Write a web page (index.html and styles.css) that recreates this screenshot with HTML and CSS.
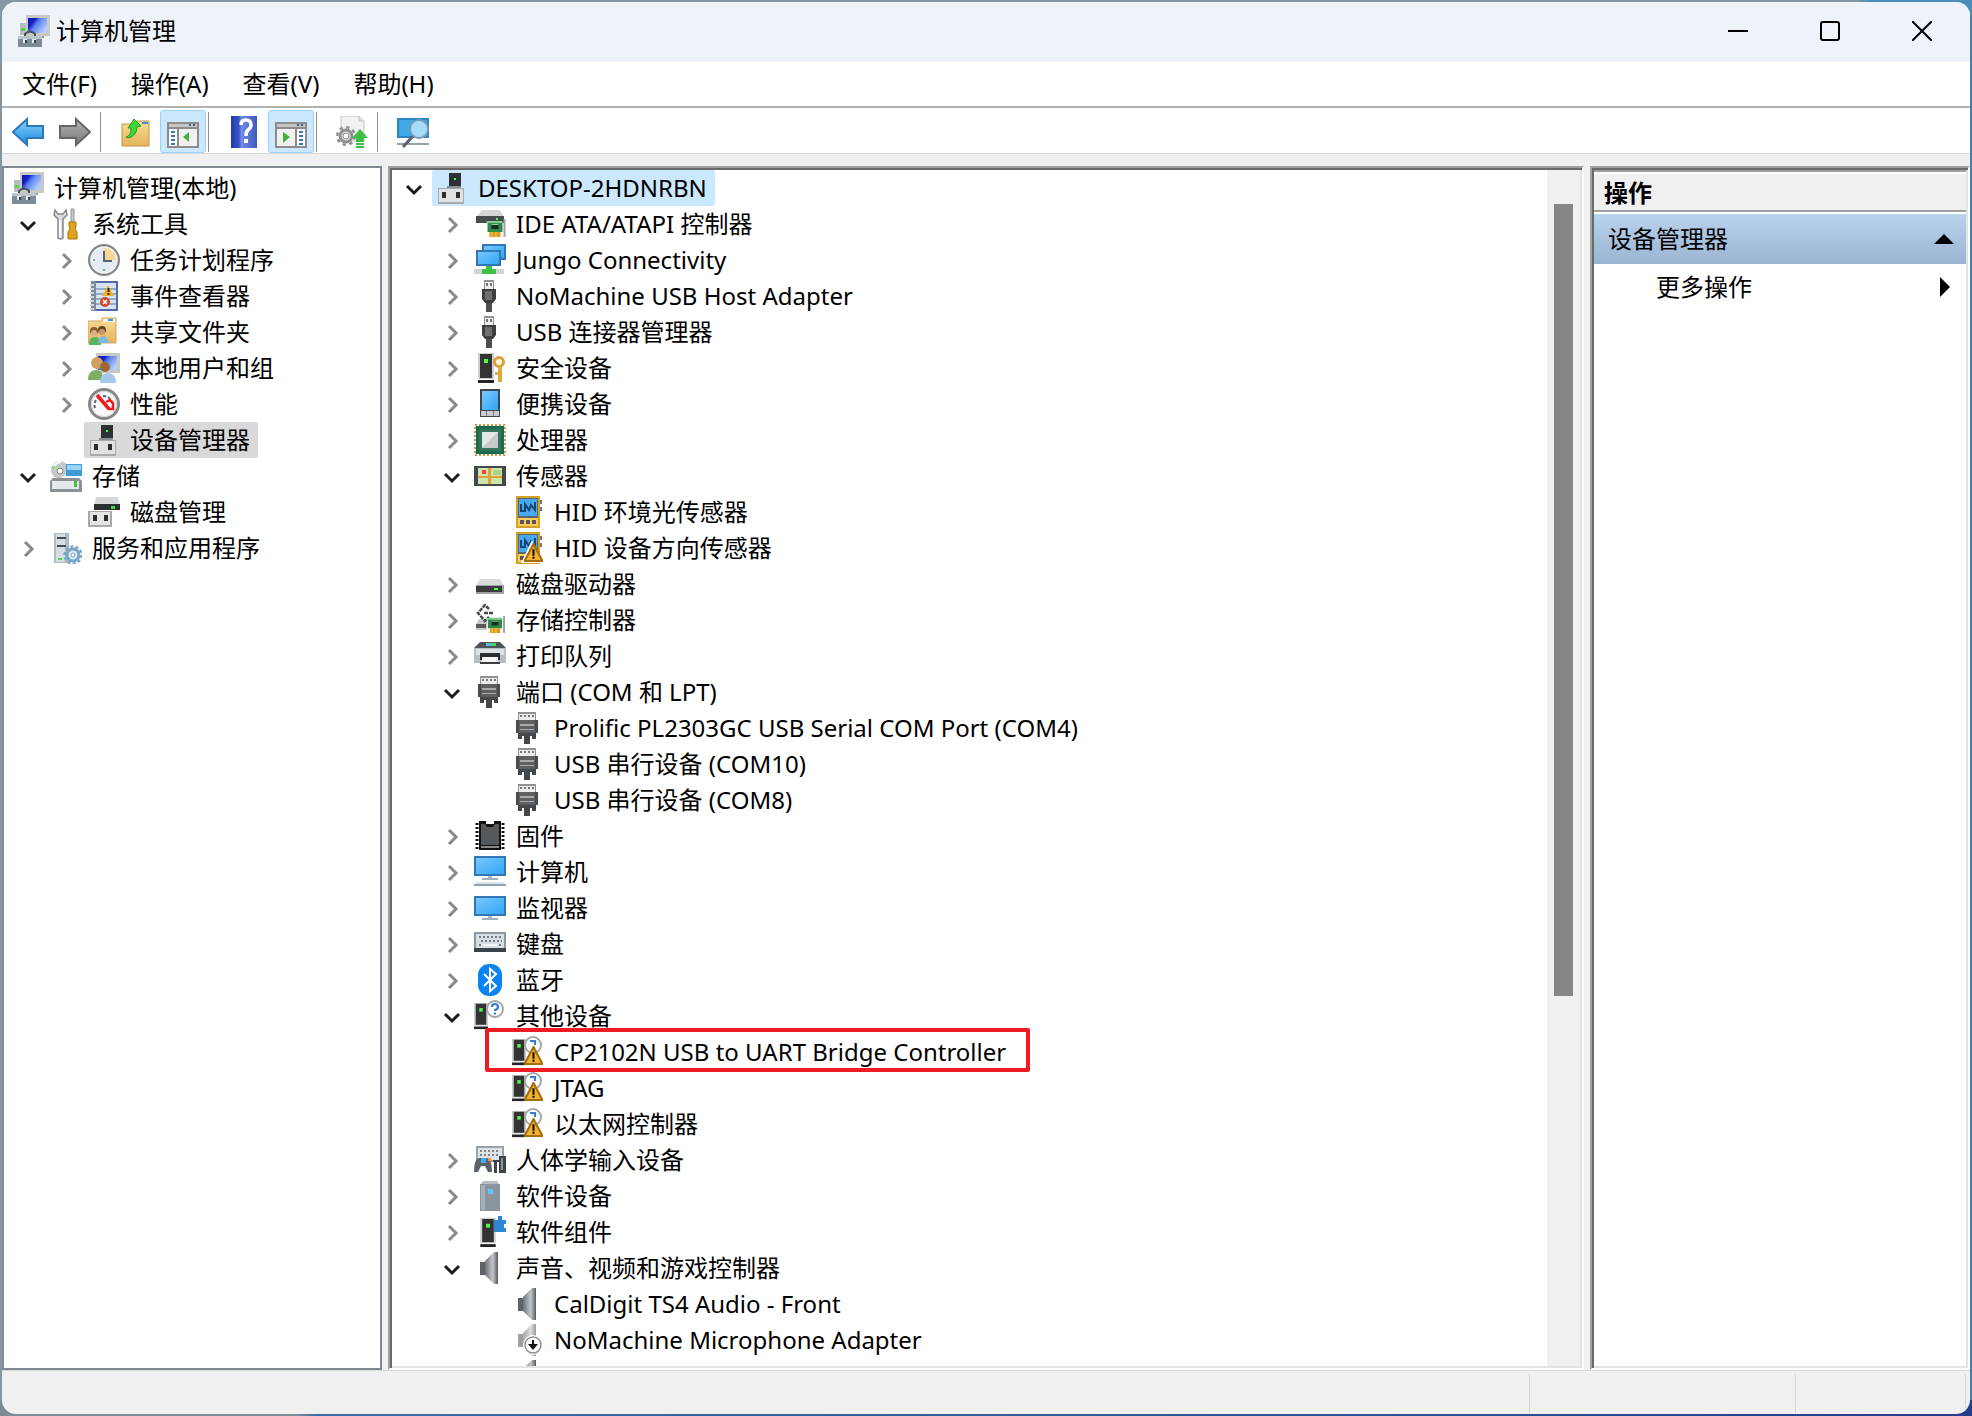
FILE: index.html
```html
<!DOCTYPE html>
<html lang="zh-CN">
<head>
<meta charset="utf-8">
<title>计算机管理</title>
<link rel="stylesheet" href="styles.css">
</head>
<body>
<svg class="sprite" aria-hidden="true">
  <defs>
    <linearGradient id="sky" x1="0" y1="0" x2="1" y2="1"><stop offset="0" stop-color="#7cc8ff"/><stop offset="1" stop-color="#2ea6f5"/></linearGradient>
    <linearGradient id="navy" x1="0" y1="0" x2="1" y2="0.6"><stop offset="0.3" stop-color="#1020c0"/><stop offset="0.5" stop-color="#5a80ee"/><stop offset="1" stop-color="#b4ccff"/></linearGradient>
    <linearGradient id="cone" x1="0" y1="0" x2="1" y2="0"><stop offset="0" stop-color="#6d7277"/><stop offset="0.6" stop-color="#c4c7ca"/><stop offset="1" stop-color="#55595d"/></linearGradient>
    <linearGradient id="folder" x1="0" y1="0" x2="0" y2="1"><stop offset="0" stop-color="#f8dc98"/><stop offset="1" stop-color="#e2b45a"/></linearGradient>
    <linearGradient id="arrowblue" x1="0" y1="0" x2="0" y2="1"><stop offset="0" stop-color="#8ad4fa"/><stop offset="1" stop-color="#1c8ae0"/></linearGradient>
    <linearGradient id="arrowgrey" x1="0" y1="0" x2="0" y2="1"><stop offset="0" stop-color="#b4b4b4"/><stop offset="1" stop-color="#777"/></linearGradient>
    <linearGradient id="book" x1="0" y1="0" x2="1" y2="0"><stop offset="0" stop-color="#2438a8"/><stop offset="0.3" stop-color="#3a54c4"/><stop offset="0.4" stop-color="#6f8cec"/><stop offset="1" stop-color="#4058b8"/></linearGradient>
  </defs>

  <symbol id="warn" viewBox="0 0 18 18"><path d="M9 1 17.500 17H.5z" fill="#f3b233" stroke="#a86c0a" stroke-width="2"/><path d="M8 6h2v6H8zM8 13h2v2H8z" fill="#111"/></symbol>
  <symbol id="card" viewBox="0 0 20 20"><path d="M2 3h15v11H2z" fill="#2f8a4a"/><path d="M1 3h16v2H1z" fill="#7ed08a"/><path d="M6 6h7v5H6z" fill="#1d2b24"/><path d="M6 6h7v1H6z" fill="#8fd49a"/><path d="M4 14h11v5H4z" fill="#dc9a1e"/><path d="M6 14h1v5H6zM10 14h1v5h-1z" fill="#f6cf6a"/><path d="M18 1h2v18h-2z" fill="#9aa0a4"/></symbol>
  <symbol id="tower" viewBox="0 0 16 30"><path d="M0 0h16v26H0z" fill="#cdd0d2"/><path d="M2 1h12v24H2z" fill="#333"/><path d="M6 6h4v4H6z" fill="#4cff3c"/><path d="M0 27h16v3H0z" fill="#20262a"/></symbol>

  <symbol id="i-mgmt" viewBox="0 0 32 32"><path d="M2 8h8v12H2z" fill="#b9bcbe"/><path d="M3 13h4v3H3z" fill="#4cd83c"/><path d="M8 0h24v21H8z" fill="#c9c9c4"/><path d="M10 3h19v15H10z" fill="url(#navy)"/><path d="M17 21h9v2h-9z" fill="#9a9a94"/><path d="M7 21v-2q5-5 10 0v2" fill="none" stroke="#4c5358" stroke-width="2"/><path d="M0 21h24v11H0z" fill="#7d8b96"/><path d="M0 21h24v3H0z" fill="#bcc6cd"/><path d="M5 24h4v4H5zM14 24h4v4h-4z" fill="#e8ecef"/><path d="M7 25h2v3H7zM16 25h2v3h-2z" fill="#33414c"/></symbol>
  <symbol id="i-tools" viewBox="0 0 32 32"><path d="M5 2 4 7l4 4v19q2.500 2 5 0V11l4-4-1-5-3 4H8z" fill="#d9dbdd" stroke="#85898d" stroke-width="1.500"/><path d="M9 12h2v17H9z" fill="#fff"/><path d="M21 1h3v13h-3z" fill="#c8cbcd" stroke="#8f9295"/><path d="M19 14h7v4l-1 3 2 3v7h-9v-7l2-3-1-3z" fill="#e2a21c" stroke="#a87409"/></symbol>
  <symbol id="i-clock" viewBox="0 0 32 32"><circle cx="16" cy="16" r="14.500" fill="#e4edf5" stroke="#85878a" stroke-width="3"/><circle cx="16" cy="16" r="13" fill="none" stroke="#f6f6f6" stroke-width="1.500"/><path d="M16 16V4a12 12 0 0 1 12 12z" fill="#f6d795"/><path d="M16 7v10h8" fill="none" stroke="#5a6470" stroke-width="2"/><path d="M16 25v2M5 16h2" stroke="#8aa" stroke-width="2"/></symbol>
  <symbol id="i-log" viewBox="0 0 32 32"><path d="M3 1h27v30H3z" fill="#5569a8"/><path d="M8 3h20v26H8z" fill="#d5e3f2"/><path d="M8 9h20M8 14h20M8 19h20M8 24h20" stroke="#7f9cc0" stroke-width="1.500"/><path d="M3 1h5v30H3z" fill="#7c8a9a"/><path d="M2 5h4M2 9h4M2 13h4M2 17h4M2 21h4M2 25h4M2 29h4" stroke="#d2d6da" stroke-width="2"/><path d="M20 5l6 11H14z" fill="#f4b128"/><path d="M19.500 8h2v4h-2zM19.500 13h2v2h-2z" fill="#3a2a00"/><circle cx="17" cy="22" r="5" fill="#d0492c"/><path d="M15 20l4 4M19 20l-4 4" stroke="#fff" stroke-width="1.500"/></symbol>
  <symbol id="i-share" viewBox="0 0 32 32"><path d="M0 5h14V2h14v25H0z" fill="url(#folder)" stroke="#d0a860"/><path d="M15 3h12v3H15z" fill="#fdf6dd"/><path d="M20 3h5v2h-5z" fill="#3d8fe0"/><circle cx="6" cy="15" r="4" fill="#8a5a30"/><circle cx="6" cy="17" r="3" fill="#d8b088"/><circle cx="14" cy="14" r="4" fill="#6a4520"/><circle cx="14" cy="16" r="3" fill="#c89868"/><path d="M1 29q0-8 6-8t6 8z" fill="#58b65c"/><path d="M10 27q1-7 5-7t6 7z" fill="#7db8ea"/></symbol>
  <symbol id="i-users" viewBox="0 0 32 32"><path d="M8 1h24v20H8z" fill="#c9c9c4"/><path d="M10 4h19v14H10z" fill="url(#navy)"/><circle cx="9" cy="11" r="6" fill="#d0a060"/><circle cx="17" cy="15" r="5" fill="#9a6a38"/><path d="M0 28q0-10 8-10t7 10z" fill="#7fae62"/><path d="M12 31q0-10 8-10t8 10z" fill="#a4c8ec"/></symbol>
  <symbol id="i-perf" viewBox="0 0 32 32"><circle cx="16" cy="16" r="14.500" fill="#fafafa" stroke="#85878a" stroke-width="3"/><circle cx="16" cy="16" r="12.500" fill="none" stroke="#d8d8d8"/><path d="M7 20a9 9 0 0 1 3-10M15 8q7 0 9 7" fill="none" stroke="#5d666e" stroke-width="2" stroke-dasharray="3 2"/><path d="M9 7l12 14" stroke="#ee1c1c" stroke-width="3.500"/><path d="M18 14l4-2 3 3v6h-5" fill="none" stroke="#ee1c1c" stroke-width="2.500"/></symbol>
  <symbol id="i-devmgr" viewBox="0 0 32 32"><path d="M13 1h12v14H13z" fill="#2e3133"/><path d="M18 6h2v2h-2z" fill="#4cff3c"/><path d="M11 14h14v2H11z" fill="#8a8e91"/><path d="M2 16h26v16H2z" fill="#a7aaad"/><path d="M3 17h24v13H3z" fill="#dfe1e3"/><path d="M6 20h4v6H6zM20 20h4v6h-4z" fill="#2a2c2e"/></symbol>
  <symbol id="i-storage" viewBox="0 0 32 32"><circle cx="10" cy="10" r="9" fill="#c5c9cc"/><path d="M3 8q3-6 8-6M12 18q5-1 6-6" stroke="#fff" stroke-width="2" fill="none"/><circle cx="10" cy="11" r="3" fill="#fff" stroke="#888"/><path d="M2 6h3v3H2z" fill="#8fe07a"/><path d="M16 4h16v12H16z" fill="#3f9bd8"/><path d="M17 5h14v5H17z" fill="#9ad4f6"/><path d="M3 18h26l3 3v11H0V21z" fill="#8b9095"/><path d="M2 21h27v8H2z" fill="#e6e9eb"/><path d="M24 21h3v6h-3z" fill="#3cc83c"/></symbol>
  <symbol id="i-diskmgmt" viewBox="0 0 32 32"><path d="M8 1h22l2 8H6z" fill="#d5d8da"/><path d="M6 8h26v6H6z" fill="#2d3032"/><path d="M23 10h4v3h-4z" fill="#3ce03c"/><path d="M0 15h24v16H0z" fill="#a7aaad"/><path d="M2 16h20v13H2z" fill="#e2e4e6"/><path d="M5 19h4v6H5zM16 19h4v6h-4z" fill="#2a2c2e"/></symbol>
  <symbol id="i-services" viewBox="0 0 32 32"><path d="M4 1h15v30H4z" fill="#aeb9c2"/><path d="M6 2h9v28H6z" fill="#d5dde3"/><path d="M7 5h9v2H7zM7 13h9v2H7z" fill="#3f4a52"/><path d="M8 26h4v2H8z" fill="#56d848"/><circle cx="23" cy="23" r="6" fill="#dcebf6" stroke="#7ba5c6" stroke-width="3"/><circle cx="23" cy="23" r="8.500" fill="none" stroke="#7ba5c6" stroke-width="2.500" stroke-dasharray="3 2.300"/><circle cx="23" cy="23" r="2" fill="#fff" stroke="#7ba5c6"/></symbol>

  <symbol id="i-ide" viewBox="0 0 32 32"><path d="M8 2h18l4 7H2z" fill="#d3d5d7"/><path d="M2 8h28v7H2z" fill="#484b4d"/><use href="#card" x="11" y="10" width="21" height="20"/><path d="M22 10h2v2h-2z" fill="#4cff3c"/></symbol>
  <symbol id="i-jungo" viewBox="0 0 32 32"><path d="M9 1h22v14H9z" fill="url(#sky)" stroke="#2f78b4" stroke-width="2"/><path d="M3 7h23v14H3z" fill="url(#sky)" stroke="#2f78b4" stroke-width="2"/><path d="M0 25h30v5H0z" fill="#d3d6d8"/><path d="M12 22h6v3h4v5H8v-5h4z" fill="#3fbf48"/></symbol>
  <symbol id="i-usb" viewBox="0 0 32 32"><path d="M10 0h10v9H10z" fill="#909396"/><path d="M11 2h8v7h-8z" fill="#eceeef"/><path d="M12 3h2v3h-2zM16 3h2v3h-2z" fill="#777"/><path d="M8 9h14v10l-3 4h-8l-3-4z" fill="#3d4042"/><path d="M11 11h7v9h-7z" fill="#6d7073"/><path d="M12 23h6v9h-6z" fill="#4b4e50"/></symbol>
  <symbol id="i-security" viewBox="0 0 32 32"><use href="#tower" x="4" y="1" width="16" height="30"/><circle cx="25" cy="10" r="4.500" fill="#fff6df" stroke="#d9a23a" stroke-width="3"/><path d="M24 15h4v15h-4zM21 20h3v3h-3z" fill="#e0a93e"/></symbol>
  <symbol id="i-portable" viewBox="0 0 32 32"><path d="M6 1h20v28H6z" fill="#3f474e"/><path d="M8 3h16v19H8z" fill="url(#sky)"/><path d="M7 23h18v5H7z" fill="#c8ccd0"/><path d="M12 23h1v5h-1zM19 23h1v5h-1z" fill="#777"/></symbol>
  <symbol id="i-cpu" viewBox="0 0 32 32"><rect x="1" y="1" width="30" height="30" fill="none" stroke="#c0a050" stroke-width="2" stroke-dasharray="2 2"/><path d="M2 2h28v28H2z" fill="#1d6a50"/><path d="M5 5h22v22H5z" fill="#35735c"/><path d="M8 8h16v16H8z" fill="#c8cacb"/><path d="M8 24 24 8H8z" fill="#e5e6e7"/></symbol>
  <symbol id="i-sensor" viewBox="0 0 32 32"><path d="M0 6h32v20H0z" fill="#44494e"/><path d="M4 8h24v16H4z" fill="#cfe5a8"/><path d="M14 8h3v16h-3zM4 16h24v2H4z" fill="#e0a13a"/><path d="M8 10h4v4H8z" fill="#f04848"/><path d="M19 10h8v5h-8z" fill="#a9d487"/></symbol>
  <symbol id="i-hid" viewBox="0 0 32 32"><path d="M4 0h24v32H4z" fill="#d2a023"/><path d="M6 2h20v20H6z" fill="#5b666f"/><path d="M7 3h18v17H7z" fill="#45aaf2"/><path d="M9 8v7h4V8l4 6 2-5 4 5V6" fill="none" stroke="#164572" stroke-width="2"/><path d="M6 22h20v8H6z" fill="#f6cd5c"/><path d="M8 24h4v4H8zM14 24h4v4h-4zM20 24h4v4h-4z" fill="#555"/><path d="M28 4h2v4h-2zM28 11h2v4h-2z" fill="#777"/></symbol>
  <symbol id="i-hidwarn" viewBox="0 0 32 32"><use href="#i-hid" width="32" height="32"/><path d="M20 8 31 31H9z" fill="#fff"/><use href="#warn" x="12" y="11" width="19" height="19"/></symbol>
  <symbol id="i-disk" viewBox="0 0 32 32"><path d="M6 11h20l4 7H2z" fill="#d9dbdd"/><path d="M2 17h28v9H2z" fill="#9ea2a5"/><path d="M2 18h26v6H2z" fill="#3a3d3f"/><path d="M20 20h4v2h-4z" fill="#4cff3c"/></symbol>
  <symbol id="i-storctrl" viewBox="0 0 32 32"><path d="M2 20l3-5h8v11H2z" fill="#c6c9cb"/><path d="M2 20h10v4H2z" fill="#55595c"/><path d="M15 5l-4-4-7 8 7 8 4-4M10 9h9" fill="none" stroke="#454a4e" stroke-width="2.500" stroke-dasharray="4 1"/><use href="#card" x="11" y="11" width="21" height="19"/></symbol>
  <symbol id="i-printer" viewBox="0 0 32 32"><path d="M6 2h20l6 6H0z" fill="#4c545a"/><path d="M12 3h9v3h-9z" fill="#55b8f4"/><path d="M17 3h5v3h-5z" fill="#50d850"/><path d="M0 8h32v15H0z" fill="#b9bec2"/><path d="M2 9h28v6H2z" fill="#dfe2e4"/><path d="M6 13h20v7H6z" fill="#2a2e31"/><path d="M8 17h16v6H8z" fill="#f4f5f6"/><path d="M6 22h20v2H6z" fill="#3a3f43"/></symbol>
  <symbol id="i-port" viewBox="0 0 32 32"><path d="M6 0h18v9H6z" fill="#909396"/><path d="M7 2h16v6H7z" fill="#e9ebec"/><path d="M8 3h2v2H8zM12 3h2v2h-2zM16 3h2v2h-2zM20 3h2v2h-2z" fill="#777"/><path d="M4 8h22v13H4z" fill="#494c4f"/><path d="M7 8h16v13H7z" fill="#5d6063"/><path d="M8 12h14v2H8zM8 17h14v1H8z" fill="#aaa"/><path d="M6 21h18v6h-4v-3h-2v8h-6v-8h-2v3H6z" fill="#45484a"/></symbol>
  <symbol id="i-firmware" viewBox="0 0 32 32"><path d="M5 1h22v29H5z" fill="#111"/><path d="M3 3v26M29 3v26" stroke="#111" stroke-width="3" stroke-dasharray="2 2"/><path d="M7 4h4l2 3h6l2-3h4v21H7z" fill="#55595c"/><path d="M7 26h18v2H7z" fill="#888"/><path d="M12 1h8v3h-8z" fill="#fff"/></symbol>
  <symbol id="i-computer" viewBox="0 0 32 32"><path d="M1 1h30v18H1z" fill="url(#sky)" stroke="#2f78b4" stroke-width="2"/><path d="M14 20h4v2h-4z" fill="#b4bcc4"/><path d="M8 22h16v2H8z" fill="#9fb0be"/><path d="M0 28h32v2H0z" fill="#8fa2b2"/><path d="M2 26h28v2H2z" fill="#dde2e6"/></symbol>
  <symbol id="i-monitor" viewBox="0 0 32 32"><path d="M1 5h30v18H1z" fill="url(#sky)" stroke="#2f78b4" stroke-width="2"/><path d="M14 24h4v3h-4z" fill="#b4bcc4"/><path d="M8 26h16v2H8z" fill="#9fb0be"/></symbol>
  <symbol id="i-keyboard" viewBox="0 0 32 32"><path d="M0 4h32v20H0z" fill="#8d979f"/><path d="M2 6h28v14H2z" fill="#d9dee2"/><path d="M5 9h23M7 13h21M5 17h23" stroke="#747d85" stroke-width="2" stroke-dasharray="2 2"/><path d="M9 16h14v2H9z" fill="#f4f6f7"/><path d="M0 20h32v4H0z" fill="#3b4348"/></symbol>
  <symbol id="i-bluetooth" viewBox="0 0 32 32"><rect x="4" y="0" width="24" height="32" rx="11" fill="#0a84f4"/><path d="M10 10l12 12-6 5V5l6 5-12 12" fill="none" stroke="#fff" stroke-width="2"/></symbol>
  <symbol id="i-other" viewBox="0 0 32 32"><use href="#tower" x="0" y="1" width="14" height="30" preserveAspectRatio="none"/><circle cx="21" cy="9" r="8" fill="#fff" stroke="#a4a8ab" stroke-width="2"/><path d="M18 7q0-3 3-3t3 3q0 2-3 3v1M21 12.500v2" fill="none" stroke="#2e7fd0" stroke-width="2.200"/></symbol>
  <symbol id="i-otherwarn" viewBox="0 0 32 32"><use href="#tower" x="0" y="1" width="14" height="30"/><circle cx="21" cy="9" r="8" fill="#fff" stroke="#a4a8ab" stroke-width="2"/><path d="M18 5h5v4" fill="none" stroke="#2e7fd0" stroke-width="2.200"/><use href="#warn" x="12" y="10" width="19" height="19"/></symbol>
  <symbol id="i-human" viewBox="0 0 32 32"><path d="M2 2h28v16H2z" fill="#98a2aa"/><path d="M4 4h24v12H4z" fill="#dfe3e6"/><path d="M6 7h20M6 11h20" stroke="#7b848b" stroke-width="2" stroke-dasharray="2 2"/><path d="M0 28q0-13 5-14h8q5 1 5 14h-4l-3-6H7l-3 6z" fill="#5a6269"/><path d="M7 14h5v5H7z" fill="#39b0f4"/><path d="M14 14h3v3h-3z" fill="#f0a030"/><path d="M15 18h2v2h-2z" fill="#e04040"/><path d="M19 16h6v2h-6zM20 18h3v11h-3zM25 12h7v17h-7z" fill="#3c4349"/><path d="M27 14h2v12h-2z" fill="#8a949c"/></symbol>
  <symbol id="i-softdev" viewBox="0 0 32 32"><path d="M9 1h14l3 4H6z" fill="#b6bec5"/><path d="M6 4h20v27H6z" fill="#8b959e"/><path d="M7 5h4v25H7z" fill="#a6afb7"/><path d="M14 9h5v5h-5z" fill="#5cc4ff"/></symbol>
  <symbol id="i-softcomp" viewBox="0 0 32 32"><use href="#tower" x="6" y="2" width="16" height="29"/><path d="M20 4h4V0h4v4h4v4h-2v4h2v4H20z" fill="#2f86d4"/></symbol>
  <symbol id="i-speaker" viewBox="0 0 32 32"><path d="M6 10h5v13H6z" fill="#5e6367"/><path d="M11 9 20 0h4v32h-4l-9-9z" fill="url(#cone)"/></symbol>
  <symbol id="i-speakerdown" viewBox="0 0 32 32"><g opacity="0.600"><use href="#i-speaker" width="32" height="32"/></g><circle cx="21" cy="21" r="10" fill="#fff"/><circle cx="21" cy="21" r="8" fill="#fff" stroke="#8b8f92" stroke-width="1.500"/><path d="M20 16h2v4h4l-5 6-5-6h4z" fill="#111"/></symbol>

  <symbol id="i-back" viewBox="0 0 32 32"><path d="M1 16 15 3v7h16v12H15v7z" fill="url(#arrowblue)" stroke="#2a78c0" stroke-width="2"/></symbol>
  <symbol id="i-forward" viewBox="0 0 32 32"><path d="M31 16 17 3v7H1v12h16v7z" fill="url(#arrowgrey)" stroke="#666" stroke-width="2"/></symbol>
  <symbol id="i-up" viewBox="0 0 32 32"><path d="M2 8h14V5h13v25H2z" fill="url(#folder)" stroke="#c0964a"/><path d="M22 6h6v2h-6z" fill="#3d8fe0"/><path d="M6 21q5-1 5-9H8l6-9 7 7-4 1q0 9-9 11z" fill="#3fd437" stroke="#28a022"/></symbol>
  <symbol id="i-treepane" viewBox="0 0 32 32"><path d="M1 7h30v24H1z" fill="#fff" stroke="#8c8c8c" stroke-width="2"/><path d="M2 8h28v3H2z" fill="#c6c6c6"/><path d="M2 11h28v2H2z" fill="#8c8c8c"/><path d="M22 8h2v2h-2zM26 8h2v2h-2z" fill="#3a5a80"/><path d="M10 13h2v17h-2z" fill="#8c8c8c"/><path d="M12 13h18v17H12z" fill="#f1f1f1"/><path d="M4 16h4M4 20h4M4 24h4M4 28h4" stroke="#3d78b8" stroke-width="2"/><path d="M22 16v10l-6-5z" fill="#3db43c"/></symbol>
  <symbol id="i-actionpane" viewBox="0 0 32 32"><path d="M1 7h30v24H1z" fill="#fff" stroke="#8c8c8c" stroke-width="2"/><path d="M2 8h28v3H2z" fill="#c6c6c6"/><path d="M2 11h28v2H2z" fill="#8c8c8c"/><path d="M22 8h2v2h-2zM26 8h2v2h-2z" fill="#3a5a80"/><path d="M20 13h2v17h-2z" fill="#8c8c8c"/><path d="M2 13h18v17H2z" fill="#f1f1f1"/><path d="M24 16h4M24 20h4M24 24h4M24 28h4" stroke="#3d78b8" stroke-width="2"/><path d="M8 16v11l7-6z" fill="#3db43c"/></symbol>
  <symbol id="i-help" viewBox="0 0 32 32"><path d="M3 0h26v32H3z" fill="url(#book)"/><path d="M13 9q0-5 5-5t5 5q0 3-3 5-2 1.500-2 6" fill="none" stroke="#fff" stroke-width="3.500"/><path d="M16 23h4v4h-4z" fill="#fff"/></symbol>
  <symbol id="i-update" viewBox="0 0 32 32"><path d="M5 0h18l5 5v20H5z" fill="#f1f2f3" stroke="#c2c5c8"/><path d="M23 0v5h5" fill="#ddd" stroke="#c2c5c8"/><circle cx="10" cy="20" r="6" fill="#ddd" stroke="#8f9295" stroke-width="3"/><circle cx="10" cy="20" r="8.800" fill="none" stroke="#8f9295" stroke-width="2.500" stroke-dasharray="3.500 3.400"/><circle cx="10" cy="20" r="3" fill="#fff" stroke="#8f9295"/><path d="M24 13l8 9h-4v4h-8v-4h-4z" fill="#3fbf48"/><path d="M20 27h8v2h-8zM20 30h8v2h-8z" fill="#3fbf48"/></symbol>
  <symbol id="i-scan" viewBox="0 0 32 32"><path d="M1 3h30v18H1z" fill="#3fa9e6" stroke="#2c86c4" stroke-width="2"/><path d="M0 27h32v2H0z" fill="#8fa2b2"/><path d="M16 20 6 31" stroke="#59636b" stroke-width="3"/><circle cx="22" cy="13" r="9" fill="#a5dbfb" stroke="#7a9bb4" stroke-width="2"/></symbol>
  <symbol id="c-right" viewBox="0 0 20 20"><path d="M7 3l7 7-7 7" fill="none" stroke="#8a8a8a" stroke-width="3"/></symbol>
  <symbol id="c-down" viewBox="0 0 20 20"><path d="M3 7l7 7 7-7" fill="none" stroke="#1c1c1c" stroke-width="3"/></symbol>
</svg>

<div class="window">
  <header class="titlebar">
    <svg class="icon"><use href="#i-mgmt"/></svg>
    <h1 class="title">计算机管理</h1>
    <div class="winbuttons">
      <button class="winbtn" aria-label="最小化"><svg viewBox="0 0 20 20"><path d="M0 10h20" stroke="#000" stroke-width="2"/></svg></button>
      <button class="winbtn" aria-label="最大化"><svg viewBox="0 0 20 20"><rect x="1" y="1" width="18" height="18" rx="2" fill="none" stroke="#000" stroke-width="2"/></svg></button>
      <button class="winbtn" aria-label="关闭"><svg viewBox="0 0 20 20"><path d="M0 0l20 20M20 0 0 20" stroke="#000" stroke-width="2"/></svg></button>
    </div>
  </header>
  <nav class="menubar">
    <button class="menu">文件(F)</button><button class="menu">操作(A)</button><button class="menu">查看(V)</button><button class="menu">帮助(H)</button>
  </nav>
  <div class="toolbar" role="toolbar">
    <div class="group">
      <button class="tool" aria-label="后退"><svg class="icon"><use href="#i-back"/></svg></button>
      <button class="tool" aria-label="前进"><svg class="icon"><use href="#i-forward"/></svg></button>
    </div>
    <div class="group">
      <button class="tool" aria-label="向上"><svg class="icon"><use href="#i-up"/></svg></button>
      <button class="tool on" aria-label="显示/隐藏控制台树"><svg class="icon"><use href="#i-treepane"/></svg></button>
    </div>
    <div class="group">
      <button class="tool" aria-label="帮助"><svg class="icon"><use href="#i-help"/></svg></button>
      <button class="tool on" aria-label="显示/隐藏操作窗格"><svg class="icon"><use href="#i-actionpane"/></svg></button>
    </div>
    <div class="group">
      <button class="tool" aria-label="更新驱动程序"><svg class="icon"><use href="#i-update"/></svg></button>
    </div>
    <div class="group">
      <button class="tool" aria-label="扫描检测硬件改动"><svg class="icon"><use href="#i-scan"/></svg></button>
    </div>
  </div>

  <main class="panes">
    <section class="pane console">
      <ul class="tree">
        <li><div class="row"><span class="label"><svg class="icon"><use href="#i-mgmt"/></svg>计算机管理(本地)</span></div>
          <ul class="branch">
            <li><div class="row"><button class="toggle" aria-label="折叠"><svg><use href="#c-down"/></svg></button><span class="label"><svg class="icon"><use href="#i-tools"/></svg>系统工具</span></div>
              <ul>
                <li class="row"><button class="toggle" aria-label="展开"><svg><use href="#c-right"/></svg></button><span class="label"><svg class="icon"><use href="#i-clock"/></svg>任务计划程序</span></li>
                <li class="row"><button class="toggle" aria-label="展开"><svg><use href="#c-right"/></svg></button><span class="label"><svg class="icon"><use href="#i-log"/></svg>事件查看器</span></li>
                <li class="row"><button class="toggle" aria-label="展开"><svg><use href="#c-right"/></svg></button><span class="label"><svg class="icon"><use href="#i-share"/></svg>共享文件夹</span></li>
                <li class="row"><button class="toggle" aria-label="展开"><svg><use href="#c-right"/></svg></button><span class="label"><svg class="icon"><use href="#i-users"/></svg>本地用户和组</span></li>
                <li class="row"><button class="toggle" aria-label="展开"><svg><use href="#c-right"/></svg></button><span class="label"><svg class="icon"><use href="#i-perf"/></svg>性能</span></li>
                <li class="row leaf"><span class="label current"><svg class="icon"><use href="#i-devmgr"/></svg>设备管理器</span></li>
              </ul>
            </li>
            <li><div class="row"><button class="toggle" aria-label="折叠"><svg><use href="#c-down"/></svg></button><span class="label"><svg class="icon"><use href="#i-storage"/></svg>存储</span></div>
              <ul>
                <li class="row leaf"><span class="label"><svg class="icon"><use href="#i-diskmgmt"/></svg>磁盘管理</span></li>
              </ul>
            </li>
            <li class="row"><button class="toggle" aria-label="展开"><svg><use href="#c-right"/></svg></button><span class="label"><svg class="icon"><use href="#i-services"/></svg>服务和应用程序</span></li>
          </ul>
        </li>
      </ul>
    </section>

    <section class="pane sunken devices">
      <ul class="tree">
        <li><div class="row"><button class="toggle" aria-label="折叠"><svg><use href="#c-down"/></svg></button><span class="label selected"><svg class="icon"><use href="#i-devmgr"/></svg>DESKTOP-2HDNRBN</span></div>
          <ul>
            <li class="row"><button class="toggle" aria-label="展开"><svg><use href="#c-right"/></svg></button><span class="label"><svg class="icon"><use href="#i-ide"/></svg>IDE ATA/ATAPI 控制器</span></li>
            <li class="row"><button class="toggle" aria-label="展开"><svg><use href="#c-right"/></svg></button><span class="label"><svg class="icon"><use href="#i-jungo"/></svg>Jungo Connectivity</span></li>
            <li class="row"><button class="toggle" aria-label="展开"><svg><use href="#c-right"/></svg></button><span class="label"><svg class="icon"><use href="#i-usb"/></svg>NoMachine USB Host Adapter</span></li>
            <li class="row"><button class="toggle" aria-label="展开"><svg><use href="#c-right"/></svg></button><span class="label"><svg class="icon"><use href="#i-usb"/></svg>USB 连接器管理器</span></li>
            <li class="row"><button class="toggle" aria-label="展开"><svg><use href="#c-right"/></svg></button><span class="label"><svg class="icon"><use href="#i-security"/></svg>安全设备</span></li>
            <li class="row"><button class="toggle" aria-label="展开"><svg><use href="#c-right"/></svg></button><span class="label"><svg class="icon"><use href="#i-portable"/></svg>便携设备</span></li>
            <li class="row"><button class="toggle" aria-label="展开"><svg><use href="#c-right"/></svg></button><span class="label"><svg class="icon"><use href="#i-cpu"/></svg>处理器</span></li>
            <li><div class="row"><button class="toggle" aria-label="折叠"><svg><use href="#c-down"/></svg></button><span class="label"><svg class="icon"><use href="#i-sensor"/></svg>传感器</span></div>
              <ul>
                <li class="row leaf"><span class="label"><svg class="icon"><use href="#i-hid"/></svg>HID 环境光传感器</span></li>
                <li class="row leaf"><span class="label"><svg class="icon"><use href="#i-hidwarn"/></svg>HID 设备方向传感器</span></li>
              </ul>
            </li>
            <li class="row"><button class="toggle" aria-label="展开"><svg><use href="#c-right"/></svg></button><span class="label"><svg class="icon"><use href="#i-disk"/></svg>磁盘驱动器</span></li>
            <li class="row"><button class="toggle" aria-label="展开"><svg><use href="#c-right"/></svg></button><span class="label"><svg class="icon"><use href="#i-storctrl"/></svg>存储控制器</span></li>
            <li class="row"><button class="toggle" aria-label="展开"><svg><use href="#c-right"/></svg></button><span class="label"><svg class="icon"><use href="#i-printer"/></svg>打印队列</span></li>
            <li><div class="row"><button class="toggle" aria-label="折叠"><svg><use href="#c-down"/></svg></button><span class="label"><svg class="icon"><use href="#i-port"/></svg>端口 (COM 和 LPT)</span></div>
              <ul>
                <li class="row leaf"><span class="label"><svg class="icon"><use href="#i-port"/></svg>Prolific PL2303GC USB Serial COM Port (COM4)</span></li>
                <li class="row leaf"><span class="label"><svg class="icon"><use href="#i-port"/></svg>USB 串行设备 (COM10)</span></li>
                <li class="row leaf"><span class="label"><svg class="icon"><use href="#i-port"/></svg>USB 串行设备 (COM8)</span></li>
              </ul>
            </li>
            <li class="row"><button class="toggle" aria-label="展开"><svg><use href="#c-right"/></svg></button><span class="label"><svg class="icon"><use href="#i-firmware"/></svg>固件</span></li>
            <li class="row"><button class="toggle" aria-label="展开"><svg><use href="#c-right"/></svg></button><span class="label"><svg class="icon"><use href="#i-computer"/></svg>计算机</span></li>
            <li class="row"><button class="toggle" aria-label="展开"><svg><use href="#c-right"/></svg></button><span class="label"><svg class="icon"><use href="#i-monitor"/></svg>监视器</span></li>
            <li class="row"><button class="toggle" aria-label="展开"><svg><use href="#c-right"/></svg></button><span class="label"><svg class="icon"><use href="#i-keyboard"/></svg>键盘</span></li>
            <li class="row"><button class="toggle" aria-label="展开"><svg><use href="#c-right"/></svg></button><span class="label"><svg class="icon"><use href="#i-bluetooth"/></svg>蓝牙</span></li>
            <li><div class="row"><button class="toggle" aria-label="折叠"><svg><use href="#c-down"/></svg></button><span class="label"><svg class="icon"><use href="#i-other"/></svg>其他设备</span></div>
              <ul>
                <li class="row leaf"><span class="label marked"><svg class="icon"><use href="#i-otherwarn"/></svg>CP2102N USB to UART Bridge Controller</span></li>
                <li class="row leaf"><span class="label"><svg class="icon"><use href="#i-otherwarn"/></svg>JTAG</span></li>
                <li class="row leaf"><span class="label"><svg class="icon"><use href="#i-otherwarn"/></svg>以太网控制器</span></li>
              </ul>
            </li>
            <li class="row"><button class="toggle" aria-label="展开"><svg><use href="#c-right"/></svg></button><span class="label"><svg class="icon"><use href="#i-human"/></svg>人体学输入设备</span></li>
            <li class="row"><button class="toggle" aria-label="展开"><svg><use href="#c-right"/></svg></button><span class="label"><svg class="icon"><use href="#i-softdev"/></svg>软件设备</span></li>
            <li class="row"><button class="toggle" aria-label="展开"><svg><use href="#c-right"/></svg></button><span class="label"><svg class="icon"><use href="#i-softcomp"/></svg>软件组件</span></li>
            <li><div class="row"><button class="toggle" aria-label="折叠"><svg><use href="#c-down"/></svg></button><span class="label"><svg class="icon"><use href="#i-speaker"/></svg>声音、视频和游戏控制器</span></div>
              <ul>
                <li class="row leaf"><span class="label"><svg class="icon"><use href="#i-speaker"/></svg>CalDigit TS4 Audio - Front</span></li>
                <li class="row leaf"><span class="label"><svg class="icon"><use href="#i-speakerdown"/></svg>NoMachine Microphone Adapter</span></li>
                <li class="row leaf"><span class="label"><svg class="icon"><use href="#i-speaker"/></svg>NVIDIA High Definition Audio</span></li>
              </ul>
            </li>
          </ul>
        </li>
      </ul>
      <div class="scrollbar"><div class="thumb"></div></div>
    </section>

    <aside class="pane sunken actions">
      <h2 class="actions-head">操作</h2>
      <button class="actions-group">设备管理器<svg class="arrow" viewBox="0 0 20 20"><path d="M0 15 10 5l10 10z"/></svg></button>
      <button class="actions-item">更多操作<svg class="arrow" viewBox="0 0 20 20"><path d="M6 0v20l10-10z"/></svg></button>
    </aside>
  </main>
  <footer class="statusbar"><div class="cell"></div><div class="cell mid"></div><div class="cell end"></div></footer>
</div>
</body>
</html>
```

FILE: styles.css
```css
* {
  box-sizing: border-box;
}

body {
  margin: 0;
  padding: 2px;
  height: 100vh;
  overflow: hidden;
  background:
    linear-gradient(90deg, #8497a5 94%, #4a8cba 95%) top / 100% 16px no-repeat,
    linear-gradient(90deg, #7d8c99 15%, #3b70a5 16%, #2a5298 70%, #263c8c) bottom / 100% 16px no-repeat,
    linear-gradient(90deg, #8295a3 50%, #3f80b4 50%);
  color: #000;
  font: 24px/36px "Noto Sans", "Noto Sans CJK SC", sans-serif;
}

button {
  margin: 0;
  padding: 0;
  border: 0;
  background: none;
  color: inherit;
  font: inherit;
}

ul {
  margin: 0;
  padding: 0;
  list-style: none;
}

.sprite {
  position: absolute;
  width: 0;
  height: 0;
}

.icon {
  flex: none;
  width: 32px;
  height: 32px;
}

.window {
  display: flex;
  flex-direction: column;
  height: 100%;
  overflow: hidden;
  border-radius: 14px;
  background: #f0f0f0;
}

.titlebar {
  display: flex;
  align-items: center;
  height: 60px;
  padding: 0 2px 2px 16px;
  gap: 6px;
  background: #eef3fa;
}

.title {
  flex: 1;
  margin: 0;
  font-size: 24px;
  font-weight: 400;
}

.winbuttons {
  display: flex;
}

.winbtn {
  display: grid;
  place-items: center;
  width: 92px;
  height: 56px;
}

.winbtn svg {
  width: 20px;
  height: 20px;
}

.menubar {
  display: flex;
  height: 46px;
  padding-left: 3px;
  border-bottom: 2px solid #b2b2b2;
  background: #fff;
}

.menu {
  padding: 0 17px;
}

.toolbar {
  display: flex;
  align-items: center;
  height: 46px;
  padding: 2px 0 0 3px;
  border-bottom: 1px solid #d9d9d9;
  background: #fff;
}

.group {
  display: flex;
  gap: 1px;
}

.group + .group {
  margin-left: 2px;
  padding-left: 13px;
  background: linear-gradient(#8d8d8d, #8d8d8d) left / 1px 40px no-repeat;
}

.tool {
  display: grid;
  place-items: center;
  width: 46px;
  height: 43px;
  border: 1px solid transparent;
  border-radius: 3px;
}

.tool.on {
  border-color: #99d1ff;
  background: #cce8ff;
}

.panes {
  display: grid;
  flex: 1;
  grid-template-columns: 380px minmax(0, 1fr) 380px;
  gap: 6px;
  min-height: 0;
  padding-top: 12px;
}

.pane {
  overflow: hidden;
  border: 2px solid #828790;
  background: #fff;
}

.sunken {
  border-color: #a0a0a0 #fff #fff #a0a0a0;
  box-shadow: inset 2px 2px #696969, inset -2px -2px #e3e3e3;
  padding: 2px;
}

.console {
  padding-top: 2px;
}

.console .tree > li > .row {
  padding-left: 4px;
}

.branch {
  padding-left: 6px;
}

.devices {
  display: flex;
}

.devices .tree {
  flex: 1;
  padding-left: 4px;
  overflow: hidden;
}

.tree ul ul,
.devices .tree ul {
  padding-left: 38px;
}

.row {
  display: flex;
  height: 36px;
}

.leaf {
  padding-left: 36px;
}

.toggle {
  display: grid;
  place-items: center;
  width: 36px;
  padding-top: 2px;
}

.toggle svg {
  width: 20px;
  height: 20px;
}

.label {
  display: flex;
  align-items: center;
  gap: 10px;
  padding: 0 8px 0 4px;
  border-radius: 2px;
  white-space: nowrap;
}

.selected {
  background: #cce8ff;
}

.current {
  background: #d9d9d9;
}

.marked {
  position: relative;
}

.marked::after {
  content: "";
  position: absolute;
  inset: -6px -16px -2px -23px;
  border: 4px solid #ed1c24;
  border-radius: 2px;
}

.scrollbar {
  display: grid;
  grid-template-rows: 15fr 7fr;
  width: 33px;
  padding: 34px 7px 0;
  background: #f0f0f0;
}

.thumb {
  background: #868686;
}

.actions {
  display: flex;
  flex-direction: column;
}

.actions-head {
  margin: 0;
  height: 42px;
  padding: 0 10px;
  border-top: 2px solid #a0a0a0;
  border-bottom: 2px solid #a0a0a0;
  box-shadow: inset 0 2px #fff;
  background: #f0f0f0;
  font-size: 24px;
  font-weight: 700;
  line-height: 42px;
}

.actions-group,
.actions-item {
  display: flex;
  align-items: center;
  justify-content: space-between;
  padding: 0 12px 0 14px;
  text-align: left;
}

.actions-group {
  height: 50px;
  margin-top: 2px;
  background: linear-gradient(#b9d3ec, #9ab4d3);
}

.actions-item {
  height: 46px;
  padding-left: 62px;
}

.arrow {
  width: 20px;
  height: 20px;
}

.statusbar {
  display: flex;
  height: 44px;
  padding: 3px 4px 1px 0;
  border-top: 1px solid #d7d7d7;
}

.cell {
  flex: 1;
  border-right: 1px solid #d7d7d7;
}

.mid {
  flex: 0 0 266px;
}

.end {
  flex: 0 0 170px;
}
```
